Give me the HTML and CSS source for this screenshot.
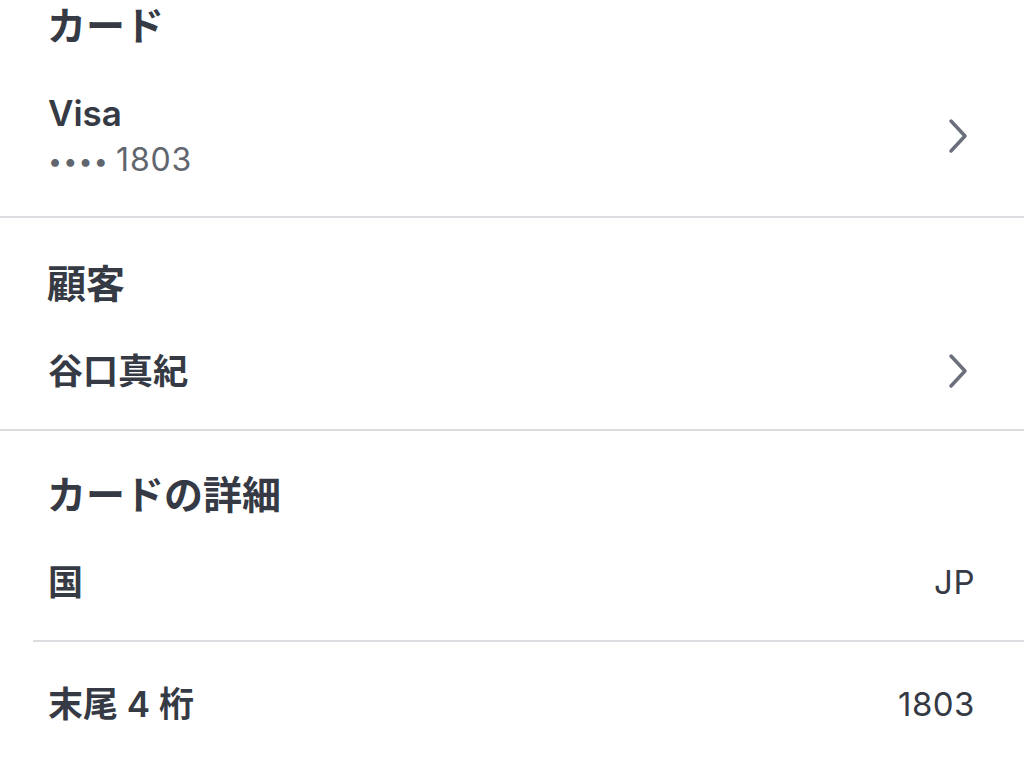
FILE: index.html
```html
<html>
  <head>
    <link rel="stylesheet" href="styles.css">
  </head>
  <body>
    <div class="section first">
      <h2 class="heading">カード</h2>
      <div class="row link card-row">
        <div class="row-main">
          <div class="row-title">Visa</div>
          <div class="row-sub"><span class="dots">••••</span>1803</div>
        </div>
        <svg class="chevron" viewBox="0 0 24 40" width="24" height="40">
          <path d="M5 5 L19 20 L5 35" />
        </svg>
      </div>
    </div>

    <div class="section">
      <h2 class="heading">顧客</h2>
      <div class="row link">
        <div class="row-title">谷口真紀</div>
        <svg class="chevron" viewBox="0 0 24 40" width="24" height="40">
          <path d="M5 5 L19 20 L5 35" />
        </svg>
      </div>
    </div>

    <div class="section last">
      <h2 class="heading">カードの詳細</h2>
      <div class="row detail">
        <div class="row-title">国</div>
        <div class="row-value">JP</div>
      </div>
      <div class="row detail bottom">
        <div class="row-title">末尾 4 桁</div>
        <div class="row-value">1803</div>
      </div>
    </div>
  </body>
</html>
```

FILE: styles.css
```css
body,
html {
  margin: 0;
  width: 100%;
  height: 100%;
  background: #ffffff;
  overflow: hidden;
}
* {
  box-sizing: border-box;
}
body {
  font-family: Inter, 'Noto Sans CJK JP', sans-serif;
  color: #353a44;
  -webkit-font-smoothing: antialiased;
}

.section {
  padding: 44px 0 36px 0;
  border-bottom: 2px solid #dcdde0;
}
.section.first {
  padding-top: 4px;
}
.section.last {
  padding-top: 42px;
  border-bottom: none;
}

.heading {
  margin: 0;
  padding-left: 47px;
  font-size: 39px;
  line-height: 44px;
  font-weight: 700;
}

.row {
  display: flex;
  align-items: center;
  justify-content: space-between;
  padding: 0 49px 0 48px;
  margin-top: 43px;
}

.row-title {
  font-size: 35px;
  line-height: 44px;
  font-weight: 600;
}

.row-sub {
  margin-top: 5px;
  height: 40px;
  font-size: 32px;
  line-height: 40px;
  letter-spacing: 0.8px;
  color: #60656e;
  white-space: nowrap;
}

.dots {
  font-size: 25px;
  line-height: 1;
  letter-spacing: 1.2px;
  margin-right: 7px;
  vertical-align: 1px;
}

.row-value {
  font-size: 33px;
  line-height: 44px;
  font-weight: 400;
  letter-spacing: 0.5px;
}

.chevron {
  margin-right: 5px;
}
.chevron path {
  fill: none;
  stroke: #6a6f7b;
  stroke-width: 3.5;
  stroke-linecap: round;
  stroke-linejoin: round;
}

.detail {
  margin-left: 33px;
  padding-left: 15px;
  padding-bottom: 36px;
  border-bottom: 2px solid #dcdde0;
}
.detail.bottom {
  margin-top: 40px;
  padding-bottom: 0;
  border-bottom: none;
}
```
